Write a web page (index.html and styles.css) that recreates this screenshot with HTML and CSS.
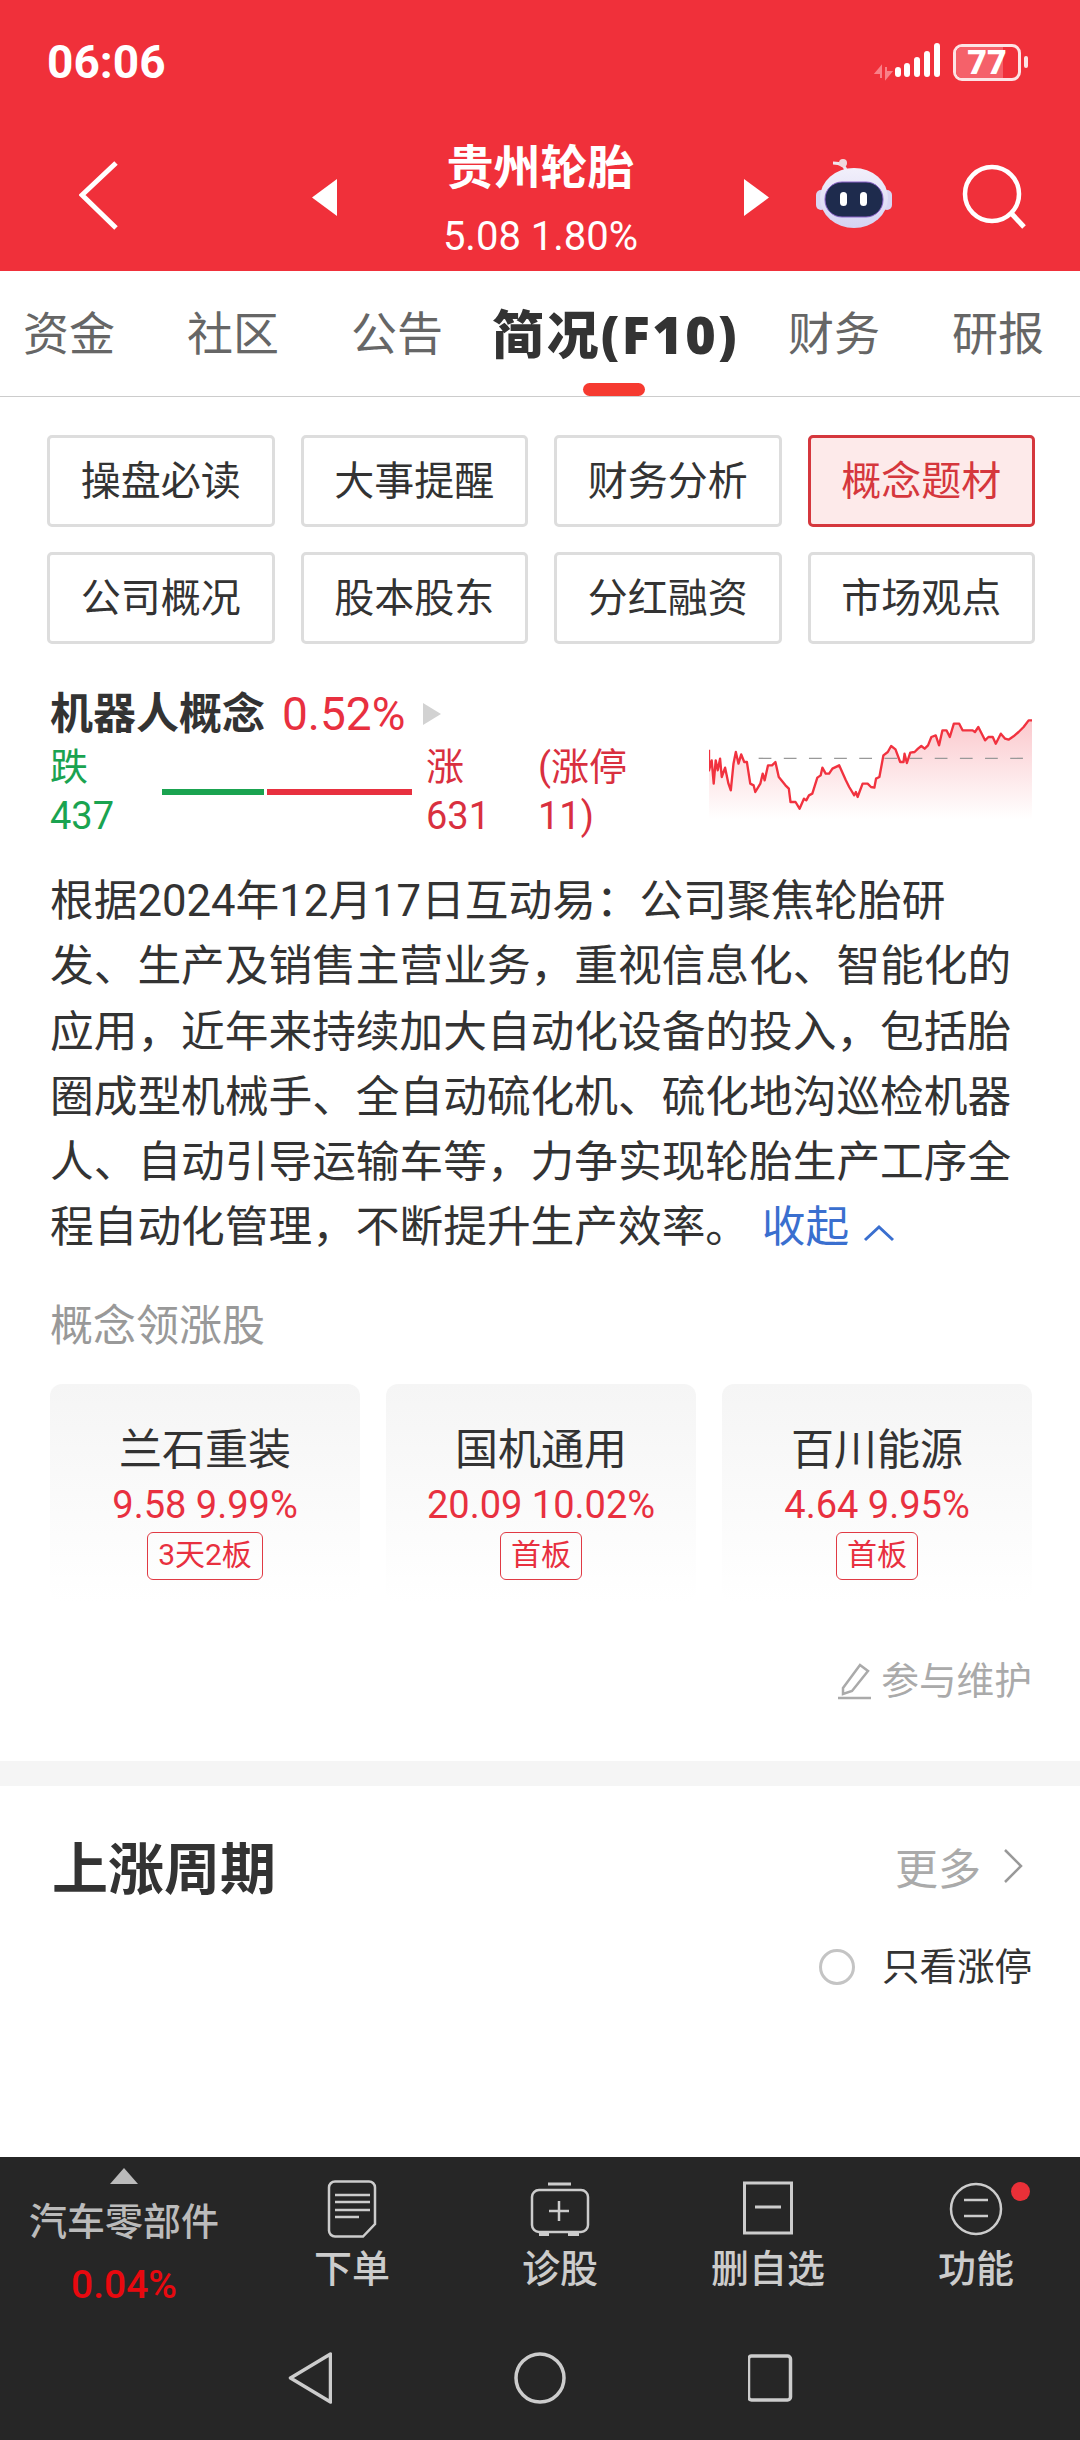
FILE: index.html
```html
<!DOCTYPE html>
<html lang="zh-CN">
<head>
<meta charset="utf-8">
<title>贵州轮胎</title>
<link rel="stylesheet" href="styles.css">
</head>
<body>
<div class="app">
  <header class="top">
    <div class="status">
      <span class="time">06:06</span>
      <div class="status-right">
        <svg class="signal" width="74" height="40" viewBox="0 0 74 40">
          <path d="M14 36V25l-5 6h5M19 25v11l5-6h-5" fill="#f98088" stroke="#f98088" stroke-width="2"/>
          <g stroke="#fff" stroke-width="6" stroke-linecap="round">
            <path d="M31 28v4M40 24v8M50 18v14M60 12v20M70 4v28"/>
          </g>
        </svg>
        <div class="battery">
          <div class="battery-body"><span class="battery-fill"></span><span class="battery-num">77</span></div>
          <span class="battery-nub"></span>
        </div>
      </div>
    </div>
    <div class="nav">
      <svg class="back" width="40" height="70" viewBox="0 0 40 70"><path d="M37 3 3 35l34 33" fill="none" stroke="#fff" stroke-width="5"/></svg>
      <svg class="tri tri-left" width="25" height="37" viewBox="0 0 25 37"><path d="M25 0v37L0 18.500z" fill="#fff"/></svg>
      <div class="stock">
        <div class="stock-name">贵州轮胎</div>
        <div class="stock-price">5.08 1.80%</div>
      </div>
      <svg class="tri tri-right" width="25" height="37" viewBox="0 0 25 37"><path d="M0 0v37l25-18.500z" fill="#fff"/></svg>
      <svg class="robot" width="76" height="70" viewBox="0 0 76 70">
        <defs>
          <linearGradient id="rb" x1="0" y1="0" x2="0" y2="1"><stop offset="0" stop-color="#f2f0fb"/><stop offset="1" stop-color="#d5d3f2"/></linearGradient>
        </defs>
        <path d="M30 13c-1-7-8-8-13-8" fill="none" stroke="#efe6ee" stroke-width="3"/>
        <circle cx="27" cy="5" r="4" fill="#f0d8dc"/>
        <rect x="0" y="32" width="10" height="20" rx="5" fill="#d9d6f3"/>
        <rect x="66" y="32" width="10" height="20" rx="5" fill="#d9d6f3"/>
        <ellipse cx="38" cy="40" rx="34" ry="30" fill="url(#rb)"/>
        <rect x="9" y="24" width="58" height="35" rx="17" fill="#1e2b4d" stroke="#8a62c9" stroke-width="1"/>
        <rect x="24" y="34" width="7" height="14" rx="3.500" fill="#fff"/>
        <rect x="44" y="34" width="7" height="14" rx="3.500" fill="#fff"/>
      </svg>
      <svg class="search" width="66" height="66" viewBox="0 0 66 66"><circle cx="30" cy="30" r="27" fill="none" stroke="#fff" stroke-width="4.500"/><path d="M49 49l13 14" stroke="#fff" stroke-width="5"/></svg>
    </div>
  </header>

  <nav class="tabs">
    <span class="tab">资金</span>
    <span class="tab">社区</span>
    <span class="tab">公告</span>
    <span class="tab tab-active">简况(F10)</span>
    <span class="tab">财务</span>
    <span class="tab">研报</span>
  </nav>

  <main class="main">
    <section class="intro">
      <div class="chips">
        <span class="chip">操盘必读</span>
        <span class="chip">大事提醒</span>
        <span class="chip">财务分析</span>
        <span class="chip chip-active">概念题材</span>
        <span class="chip">公司概况</span>
        <span class="chip">股本股东</span>
        <span class="chip">分红融资</span>
        <span class="chip">市场观点</span>
      </div>

      <div class="concept">
        <div class="concept-left">
          <div class="concept-head">
            <span class="concept-name">机器人概念</span>
            <span class="concept-pct">0.52%</span>
            <svg class="concept-arrow" width="18" height="22" viewBox="0 0 18 22"><path d="M0 0v22l18-11z" fill="#d2d2d2"/></svg>
          </div>
          <div class="breadth">
            <div class="breadth-col down"><span>跌</span><span>437</span></div>
            <div class="breadth-bars"><span class="bar-down"></span><span class="bar-up"></span></div>
            <div class="breadth-col up col-rise"><span>涨</span><span>631</span></div>
            <div class="breadth-col up"><span>(涨停</span><span>11)</span></div>
          </div>
        </div>
        <svg class="spark" width="323" height="100" viewBox="92 116 963 300" preserveAspectRatio="none">
          <defs>
            <linearGradient id="sg" x1="0" y1="0" x2="0" y2="1"><stop offset="0" stop-color="#fbc9cd"/><stop offset="1" stop-color="#ffffff"/></linearGradient>
          </defs>
          <path fill="url(#sg)" d="M92 208 92 270 100 240 106 310 112 240 118 270 125 235 130 290 140 262 150 310 157 330 165 250 172 215 180 250 188 222 197 245 205 245 215 310 225 315 230 335 245 310 252 280 258 300 268 255 280 255 290 245 300 290 320 315 330 325 335 365 350 365 362 385 375 355 382 360 390 345 400 340 415 292 425 285 430 262 440 280 450 280 460 265 480 255 500 300 510 320 525 345 530 335 535 350 550 310 565 310 575 320 585 322 590 295 600 290 612 225 625 215 635 197 648 207 662 245 672 245 675 220 682 248 692 217 705 215 715 205 725 197 735 205 745 195 755 170 768 165 778 195 788 150 800 150 810 170 822 130 838 130 848 150 878 150 885 155 895 140 915 180 925 170 938 170 947 190 962 160 975 175 985 178 1000 168 1015 155 1030 140 1045 120 1055 120V416H92Z"/>
          <path d="M240 234H1030" stroke="#999" stroke-width="4" stroke-dasharray="38 37" fill="none"/>
          <path fill="none" stroke="#f1323f" stroke-width="7" stroke-linejoin="round" d="M92 208 92 270 100 240 106 310 112 240 118 270 125 235 130 290 140 262 150 310 157 330 165 250 172 215 180 250 188 222 197 245 205 245 215 310 225 315 230 335 245 310 252 280 258 300 268 255 280 255 290 245 300 290 320 315 330 325 335 365 350 365 362 385 375 355 382 360 390 345 400 340 415 292 425 285 430 262 440 280 450 280 460 265 480 255 500 300 510 320 525 345 530 335 535 350 550 310 565 310 575 320 585 322 590 295 600 290 612 225 625 215 635 197 648 207 662 245 672 245 675 220 682 248 692 217 705 215 715 205 725 197 735 205 745 195 755 170 768 165 778 195 788 150 800 150 810 170 822 130 838 130 848 150 878 150 885 155 895 140 915 180 925 170 938 170 947 190 962 160 975 175 985 178 1000 168 1015 155 1030 140 1045 120 1055 120"/>
        </svg>
      </div>

      <p class="desc">根据2024年12月17日互动易：公司聚焦轮胎研<br>发、生产及销售主营业务，重视信息化、智能化的<br>应用，近年来持续加大自动化设备的投入，包括胎<br>圈成型机械手、全自动硫化机、硫化地沟巡检机器<br>人、自动引导运输车等，力争实现轮胎生产工序全<br>程自动化管理，不断提升生产效率。 <span class="collapse">收起<svg class="collapse-icon" width="32" height="18" viewBox="0 0 32 18"><path d="M2 16 16 3l14 13" fill="none" stroke="#3a6fcf" stroke-width="3"/></svg></span></p>

      <h3 class="leaders-title">概念领涨股</h3>
      <div class="leaders">
        <div class="leader">
          <div class="leader-name">兰石重装</div>
          <div class="leader-price">9.58 9.99%</div>
          <span class="leader-tag">3天2板</span>
        </div>
        <div class="leader">
          <div class="leader-name">国机通用</div>
          <div class="leader-price">20.09 10.02%</div>
          <span class="leader-tag">首板</span>
        </div>
        <div class="leader">
          <div class="leader-name">百川能源</div>
          <div class="leader-price">4.64 9.95%</div>
          <span class="leader-tag">首板</span>
        </div>
      </div>

      <div class="maintain">
        <svg width="36" height="38" viewBox="0 0 36 38"><path d="M5 26 22 3l8 6-16 20-9 3zM0 36h33" fill="none" stroke="#aaa" stroke-width="2.500"/></svg>
        <span>参与维护</span>
      </div>
    </section>

    <div class="divider"></div>

    <section class="cycle">
      <div class="cycle-head">
        <h2 class="cycle-title">上涨周期</h2>
        <div class="more">
          <span>更多</span>
          <svg width="20" height="36" viewBox="0 0 20 36"><path d="M2 2l16 16L2 34" fill="none" stroke="#999" stroke-width="2.500"/></svg>
        </div>
      </div>
      <div class="filter">
        <span class="radio"></span>
        <span>只看涨停</span>
      </div>
    </section>
  </main>

  <footer class="bottom">
    <div class="actions">
      <div class="sector">
        <svg width="28" height="16" viewBox="0 0 28 16"><path d="M14 0l14 16H0z" fill="#bbb"/></svg>
        <span class="sector-name">汽车零部件</span>
        <span class="sector-pct">0.04%</span>
      </div>
      <div class="action">
        <svg width="50" height="58" viewBox="0 0 50 58"><path d="M8 1.500h34a6 6 0 0 1 6 6V44L36 56.500H8a6 6 0 0 1-6-6V7.500a6 6 0 0 1 6-6z" fill="none" stroke="#ccc" stroke-width="2.500"/><path d="M8 15h35M8 22h35M8 30h35M8 37h24" stroke="#ccc" stroke-width="2.500"/></svg>
        <span>下单</span>
      </div>
      <div class="action">
        <svg width="60" height="58" viewBox="0 0 60 58"><path d="M18 4h23" stroke="#ccc" stroke-width="3"/><rect x="2" y="10" width="56" height="42" rx="7" fill="none" stroke="#ccc" stroke-width="2.500"/><path d="M29 21v20M19 31h20" stroke="#ccc" stroke-width="2.500"/><path d="M9 54h10M38 54h11" stroke="#ccc" stroke-width="4"/></svg>
        <span>诊股</span>
      </div>
      <div class="action">
        <svg width="50" height="58" viewBox="0 0 50 58"><rect x="1.500" y="3" width="47" height="50" fill="none" stroke="#ccc" stroke-width="3"/><path d="M12 27h26" stroke="#ccc" stroke-width="3"/></svg>
        <span>删自选</span>
      </div>
      <div class="action action-func">
        <svg width="54" height="58" viewBox="0 0 54 58"><circle cx="27" cy="29" r="25" fill="none" stroke="#ccc" stroke-width="2.500"/><path d="M15 20h24M15 36h24" stroke="#ccc" stroke-width="2.500"/></svg>
        <span>功能</span>
        <i class="dot"></i>
      </div>
    </div>
    <div class="sysnav">
      <svg width="46" height="52" viewBox="-1.500 0 46 52"><path d="M43 2 3 26l40 24z" fill="none" stroke="#ccc" stroke-width="3.500" stroke-linejoin="round"/></svg>
      <svg width="52" height="52" viewBox="0 0 52 52"><circle cx="26" cy="26" r="24" fill="none" stroke="#ccc" stroke-width="3.500"/></svg>
      <svg width="46" height="48" viewBox="1.500 0 46 48"><rect x="2" y="2" width="42" height="44" rx="3" fill="none" stroke="#ccc" stroke-width="3.500"/></svg>
    </div>
  </footer>
</div>
</body>
</html>
```
FILE: styles.css
```css
* { box-sizing: border-box; }
html, body { margin: 0; padding: 0; }
body {
  font-family: Roboto, "Noto Sans CJK SC", sans-serif;
  background: #fff;
}
.app {
  width: 1080px;
  height: 2440px;
  display: flex;
  flex-direction: column;
  overflow: hidden;
}

/* header */
.top { height: 271px; background: #f0303a; color: #fff; display: flex; flex-direction: column; flex-shrink: 0; }
.status {
  height: 124px;
  padding: 0 52px 0 47px;
  display: flex;
  align-items: center;
  justify-content: space-between;
}
.time { font-size: 46px; font-weight: 700; letter-spacing: 0; }
.status-right { display: flex; align-items: center; gap: 12px; }
.signal { display: block; }
.battery { display: flex; align-items: center; gap: 3px; }
.battery-body {
  position: relative;
  width: 68px;
  height: 37px;
  border: 3px solid #fde4e5;
  border-radius: 9px;
  overflow: hidden;
  display: flex;
  align-items: center;
  justify-content: center;
}
.battery-fill { position: absolute; left: 0; top: 0; bottom: 0; width: 75%; background: #f5616a; }
.battery-num { position: relative; font-size: 34px; font-weight: 900; line-height: 1; color: #fff; }
.battery-nub { width: 4px; height: 12px; background: #fde4e5; border-radius: 2px; }

.nav { flex: 1; display: flex; align-items: flex-start; padding-left: 79px; }
.back { margin-top: 36px; }
.tri { margin-top: 55px; }
.tri-left { margin-left: 193px; }
.stock { width: 407px; text-align: center; margin-top: 14px; }
.stock-name { font-size: 47px; font-weight: 700; line-height: 60px; }
.stock-price { font-size: 40px; line-height: 46px; margin-top: 16px; }
.robot { margin-left: 47px; margin-top: 34px; }
.search { margin-left: 70px; margin-top: 40px; }

/* tabs */
.tabs {
  height: 126px;
  border-bottom: 1.500px solid #ccc;
  display: flex;
  align-items: center;
  gap: 72px;
  padding: 0 0 0 23px;
  flex-shrink: 0;
}
.tab { position: relative; font-size: 46px; color: #666; white-space: nowrap; line-height: 60px; }
.tab-active {
  font-family: "Open Sans", "Noto Sans CJK SC", sans-serif;
  font-size: 52px;
  font-weight: 800;
  letter-spacing: 2.400px;
  color: #333;
  margin: 0 -23px 0 -23px;
}
.tab-active::after {
  content: "";
  position: absolute;
  left: 91px;
  top: 79px;
  width: 62px;
  height: 13px;
  border-radius: 7px;
  background: #f63a30;
}

/* main */
.main { flex: 1; display: flex; flex-direction: column; min-height: 0; }
.intro { padding: 38px 48px 0 50px; height: 1364px; flex-shrink: 0; }
.chips {
  display: grid;
  grid-template-columns: repeat(4, 227.500px);
  gap: 25px 26px;
  margin-left: -3px;
}
.chip {
  height: 92px;
  padding-bottom: 6px;
  border: 3px solid #ddd;
  border-radius: 5px;
  display: flex;
  align-items: center;
  justify-content: center;
  font-size: 40px;
  color: #333;
}
.chip-active { border-color: #d5373d; background: #fdeaea; color: #d5373d; }

.concept { display: flex; justify-content: space-between; margin-top: 40px; }
.concept-left { width: 640px; }
.concept-head { display: flex; align-items: center; height: 60px; }
.concept-name { font-size: 43px; font-weight: 700; color: #333; line-height: 60px; }
.concept-pct { font-size: 46px; color: #e8303f; margin-left: 17px; line-height: 60px; }
.concept-arrow { margin-left: 18px; }
.breadth { display: flex; align-items: center; margin-top: -1px; }
.breadth-col { display: flex; flex-direction: column; font-size: 38px; line-height: 49px; }
.down { color: #1aa350; width: 112px; }
.up { color: #d9303f; }
.col-rise { width: 112px; margin-left: 14px; }
.breadth-bars { display: flex; gap: 3px; width: 250px; height: 6px; }
.bar-down { width: 102px; background: #1aa350; }
.bar-up { width: 145px; background: #e8303f; }
.spark { display: block; margin-top: 35px; }

.desc {
  margin: 28px 0 0;
  font-size: 43.700px;
  line-height: 65.300px;
  color: #333;
  white-space: nowrap;
}
.collapse { color: #3a6fcf; margin-left: 2px; }
.collapse-icon { margin-left: 14px; }

.leaders-title { margin: 35px 0 0; font-size: 43px; line-height: 60px; font-weight: 400; color: #999; }
.leaders { display: grid; grid-template-columns: repeat(3, 310px); gap: 26px; margin-top: 28px; }
.leader {
  height: 218px;
  border-radius: 12px;
  background: linear-gradient(#f5f5f5, #ffffff);
  display: flex;
  flex-direction: column;
  align-items: center;
  padding-top: 37px;
}
.leader-name { font-size: 43px; line-height: 58px; color: #333; }
.leader-price { font-size: 38px; line-height: 46px; color: #e8303f; margin-top: 3px; }
.leader-tag {
  margin-top: 4px;
  height: 48px;
  padding: 0 10px;
  border: 1.500px solid #e03a44;
  border-radius: 6px;
  font-size: 30px;
  line-height: 44px;
  color: #e8303f;
}
.maintain {
  margin-top: 54px;
  display: flex;
  align-items: center;
  justify-content: flex-end;
  gap: 7px;
  font-size: 37.700px;
  line-height: 50px;
  color: #aaa;
}

.divider { height: 25px; background: #f5f5f5; flex-shrink: 0; }
.cycle { padding: 44px 48px 0 52px; }
.cycle-head { display: flex; align-items: center; justify-content: space-between; }
.cycle-title { margin: 0; font-size: 56px; font-weight: 700; color: #333; line-height: 80px; }
.more { display: flex; align-items: center; gap: 22px; font-size: 43px; color: #aaa; padding-right: 9px; margin-bottom: 8px; }
.filter {
  margin-top: 27px;
  display: flex;
  align-items: center;
  justify-content: flex-end;
  gap: 27px;
  font-size: 37.500px;
  line-height: 60px;
  color: #333;
}
.radio { width: 36px; height: 36px; border: 3px solid #c4c4c4; border-radius: 50%; }

/* bottom */
.bottom { height: 283px; background: #262626; flex-shrink: 0; display: flex; flex-direction: column; }
.actions { display: grid; grid-template-columns: 248px repeat(4, 208px); height: 178px; flex-shrink: 0; }
.sector { display: flex; flex-direction: column; align-items: center; padding-top: 11px; color: #bbb; }
.sector-name { font-size: 38px; font-weight: 500; line-height: 50px; margin-top: 13px; }
.sector-pct { font-size: 39px; font-weight: 500; color: #e8090f; line-height: 50px; margin-top: 13px; }
.action {
  position: relative;
  display: flex;
  flex-direction: column;
  align-items: center;
  padding-top: 23px;
  font-size: 38px;
  line-height: 50px;
  font-weight: 500;
  color: #ccc;
}
.action svg { margin-bottom: 6px; }
.dot {
  position: absolute;
  left: 139px;
  top: 25px;
  width: 19px;
  height: 19px;
  border-radius: 50%;
  background: #ea3038;
}
.sysnav {
  flex: 1;
  display: flex;
  justify-content: center;
  align-items: center;
  gap: 182px;
  padding-bottom: 19px;
}
```
